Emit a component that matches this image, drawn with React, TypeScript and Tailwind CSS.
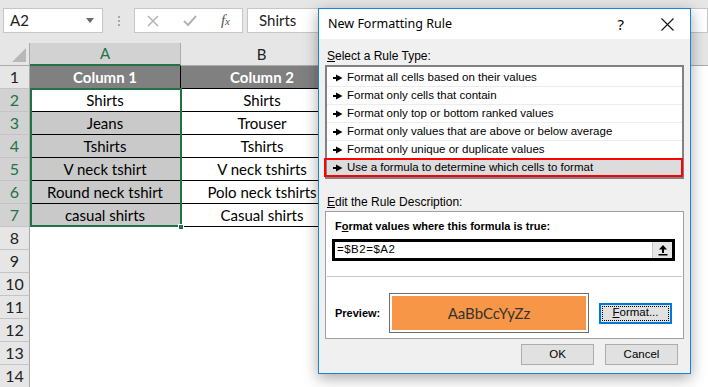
import React from "react";

const colA = ["Shirts", "Jeans", "Tshirts", "V neck tshirt", "Round neck tshirt", "casual shirts"];
const colB = ["Shirts", "Trouser", "Tshirts", "V neck tshirts", "Polo neck tshirts", "Casual shirts"];

const ruleTypes = [
	"Format all cells based on their values",
	"Format only cells that contain",
	"Format only top or bottom ranked values",
	"Format only values that are above or below average",
	"Format only unique or duplicate values",
	"Use a formula to determine which cells to format",
];

const RuleArrow = () => (
	<svg width="10" height="8" viewBox="0 0 10 8" className="shrink-0">
		<rect x="0" y="3" width="4" height="2" fill="#000" />
		<polygon points="3,0.5 9.5,4 3,7.5" fill="#000" />
	</svg>
);

const Toolbar = () => (
	<div className="h-[43px] bg-[#e6e6e6] flex items-start pt-[8px] pl-[3px] gap-0">
		<div className="w-[100px] h-[25px] bg-white border border-[#c6c6c6] flex items-center justify-between pl-[6px] pr-[8px] text-[15px] text-[#222]">
			<span>A2</span>
			<svg width="8" height="5" viewBox="0 0 8 5">
				<polygon points="0,0 8,0 4,5" fill="#6b6b6b" />
			</svg>
		</div>
		<div className="w-[31px] h-[25px] flex flex-col items-center justify-center gap-[2px]">
			<div className="w-[2px] h-[2px] bg-[#a8a8a8]" />
			<div className="w-[2px] h-[2px] bg-[#a8a8a8]" />
			<div className="w-[2px] h-[2px] bg-[#a8a8a8]" />
		</div>
		<div className="w-[109px] h-[25px] bg-white border border-[#c6c6c6] flex items-center justify-between pl-[12px] pr-[12px]">
			<svg width="12" height="12" viewBox="0 0 12 12">
				<path d="M1 1 L11 11 M11 1 L1 11" stroke="#b4b4b4" strokeWidth="1.5" />
			</svg>
			<svg width="14" height="12" viewBox="0 0 14 12">
				<path d="M1 6 L5 10 L13 1" stroke="#b4b4b4" strokeWidth="2" fill="none" />
			</svg>
			<span className="font-['Liberation_Serif',serif] italic text-[15px] text-[#555] leading-none">
				f<span className="text-[11px]">x</span>
			</span>
		</div>
		<div className="ml-[4px] flex-1 h-[25px] bg-white border border-[#c6c6c6] flex items-center pl-[11px] text-[15px] text-[#222]">
			Shirts
		</div>
	</div>
);

const ColumnHeader = () => (
	<div className="h-[23px] flex bg-[#e6e6e6] text-[15px]">
		<div className="w-[30px] border-r border-[#ababab] border-b border-b-[#ababab] flex items-end justify-end p-[3px]">
			<svg width="14" height="14" viewBox="0 0 14 14">
				<polygon points="14,0 14,14 0,14" fill="#b8b8b8" />
			</svg>
		</div>
		<div className="w-[151px] bg-[#d2d2d2] border-r border-[#ababab] border-b-2 border-b-[#217346] flex items-center justify-center text-[#217346]">
			A
		</div>
		<div className="w-[162px] border-r border-[#ababab] border-b border-b-[#ababab] flex items-center justify-center text-[#222]">
			B
		</div>
		<div className="flex-1 border-b border-[#ababab]" />
	</div>
);

const RowHead = ({ n, selected }: { n: number; selected?: boolean }) => (
	<div
		className={
			selected
				? "w-[30px] shrink-0 bg-[#d2d2d2] text-[#217346] text-[16px] border-r border-[#ababab] border-b border-b-[#c4c4c4] flex items-center justify-center"
				: "w-[30px] shrink-0 bg-[#e6e6e6] text-[#222] text-[16px] border-r border-[#ababab] border-b border-b-[#c4c4c4] flex items-center justify-center"
		}
	>
		{n}
	</div>
);

const Sheet = () => (
	<div className="relative text-[15px] font-['Lato',sans-serif]">
		<div className="h-[23px] flex">
			<RowHead n={1} />
			<div className="w-[151px] bg-[#808080] text-white font-bold border-r border-b border-black flex items-center justify-center">
				Column 1
			</div>
			<div className="w-[162px] bg-[#808080] text-white font-bold border-b border-black flex items-center justify-center">
				Column 2
			</div>
			<div className="flex-1" />
		</div>
		{colA.map((a, i) => (
			<div className="h-[23px] flex" key={i}>
				<RowHead n={i + 2} selected />
				<div
					className={
						i === 0
							? "w-[151px] bg-white border-r border-b border-black flex items-center justify-center text-black"
							: "w-[151px] bg-[#c9c9c9] border-r border-b border-black flex items-center justify-center text-black"
					}
				>
					{a}
				</div>
				<div className="w-[162px] bg-white border-b border-black flex items-center justify-center text-black whitespace-nowrap">
					{colB[i]}
				</div>
				<div className="flex-1" />
			</div>
		))}
		{[8, 9, 10, 11, 12, 13, 14].map((n) => (
			<div className="h-[23px] flex" key={n}>
				<RowHead n={n} />
				<div className="flex-1" />
			</div>
		))}
		{/* selection box */}
		<div className="absolute left-[30px] top-[22px] w-[152px] h-[139px] border-2 border-[#217346]" />
		<div className="absolute left-[178px] top-[158px] w-[6px] h-[6px] bg-[#217346] border border-white" />
	</div>
);

const Dialog = () => (
	<div className="absolute left-[318px] top-[8px] w-[373px] h-[366px] border border-[#1883d7] bg-[#f0f0f0] shadow-[0_4px_14px_rgba(0,0,0,0.35)] flex flex-col font-['Liberation_Sans',sans-serif] text-[11.5px] text-black">
		<div className="h-[30px] bg-white flex items-center pl-[9px] pr-[16px] shrink-0">
			<span className="font-['Noto_Sans',sans-serif] text-[12.5px] flex-1">New Formatting Rule</span>
			<span className="font-['Noto_Sans',sans-serif] text-[15px] mr-[37px]">?</span>
			<svg width="13" height="13" viewBox="0 0 13 13">
				<path d="M0.5 0.5 L12.5 12.5 M12.5 0.5 L0.5 12.5" stroke="#111" strokeWidth="1.1" />
			</svg>
		</div>
		<div className="flex flex-col px-[6px]">
			<div className="mt-[10px] leading-[14px] pl-[2px] text-[12px]">
				<span className="underline">S</span>elect a Rule Type:
			</div>
			<div className="mt-[2px] h-[114px] border-2 border-[#828282] bg-white pt-[2px] flex flex-col">
				{ruleTypes.map((r, i) =>
					i === 5 ? (
						<div key={i} className="relative h-[18px] flex items-center gap-[4px] pl-[6px] bg-[#dcdcdc]">
							<div className="absolute left-[-3px] right-[-1px] top-[-1px] bottom-[0px] border-2 border-[#ff0000]" />
							<RuleArrow />
							<span>{r}</span>
						</div>
					) : (
						<div key={i} className="h-[18px] flex items-center gap-[4px] pl-[6px] border-b border-[#ececec]">
							<RuleArrow />
							<span>{r}</span>
						</div>
					)
				)}
			</div>
			<div className="mt-[16px] leading-[14px] pl-[2px] text-[12px]">
				<span className="underline">E</span>dit the Rule Description:
			</div>
			<div className="mt-[2px] h-[128px] border border-[#a0a0a0] bg-white flex flex-col">
				<div className="mt-[7px] leading-[14px] pl-[9px] font-bold text-[11px]">
					F<span className="underline">o</span>rmat values where this formula is true:
				</div>
				<div className="mt-[6px] ml-[6px] w-[343px] h-[22px] border-[3px] border-black flex items-center">
					<span className="flex-1 pl-[2px] tracking-[0.5px]">=$B2=$A2</span>
					<div className="w-[20px] h-full bg-[#e6e6e6] border-l border-[#c8c8c8] flex items-center justify-center">
						<svg width="10" height="11" viewBox="0 0 10 11">
							<path d="M5 1 L5 8" stroke="#000" strokeWidth="2" />
							<polygon points="5,0 9,4.5 1,4.5" fill="#000" />
							<rect x="0.5" y="9" width="9" height="1.5" fill="#000" />
						</svg>
					</div>
				</div>
				<div className="mt-[15px] ml-[1px] w-[355px] h-[1px] bg-[#c8c8c8]" />
				<div className="mt-[16px] flex items-center">
					<span className="w-[63px] pl-[9px] font-bold text-[11px]">Preview:</span>
					<div className="w-[200px] h-[40px] border border-[#6d6d6d] p-[2px] bg-white">
						<div className="w-full h-full bg-[#f79646] flex items-center justify-center font-['Lato',sans-serif] text-[15px] text-[#333]">
							AaBbCcYyZz
						</div>
					</div>
					<div className="ml-[10px] w-[73px] h-[21px] border-2 border-[#0078d7] bg-[#e1e1e1] p-[1px]">
						<div className="w-full h-full border border-dotted border-black flex items-center justify-center">
							<span className="underline">F</span>ormat...
						</div>
					</div>
				</div>
			</div>
			<div className="mt-[5px] flex justify-end gap-[11px] pr-[6px]">
				<div className="w-[73px] h-[21px] bg-[#e1e1e1] border border-[#adadad] flex items-center justify-center">
					OK
				</div>
				<div className="w-[73px] h-[21px] bg-[#e1e1e1] border border-[#adadad] flex items-center justify-center">
					Cancel
				</div>
			</div>
		</div>
	</div>
);

const App = () => {
	return (
		<div className="relative w-[708px] h-[387px] overflow-hidden bg-white font-['Lato',sans-serif]">
			<Toolbar />
			<ColumnHeader />
			<Sheet />
			<Dialog />
		</div>
	);
};

export default App;
